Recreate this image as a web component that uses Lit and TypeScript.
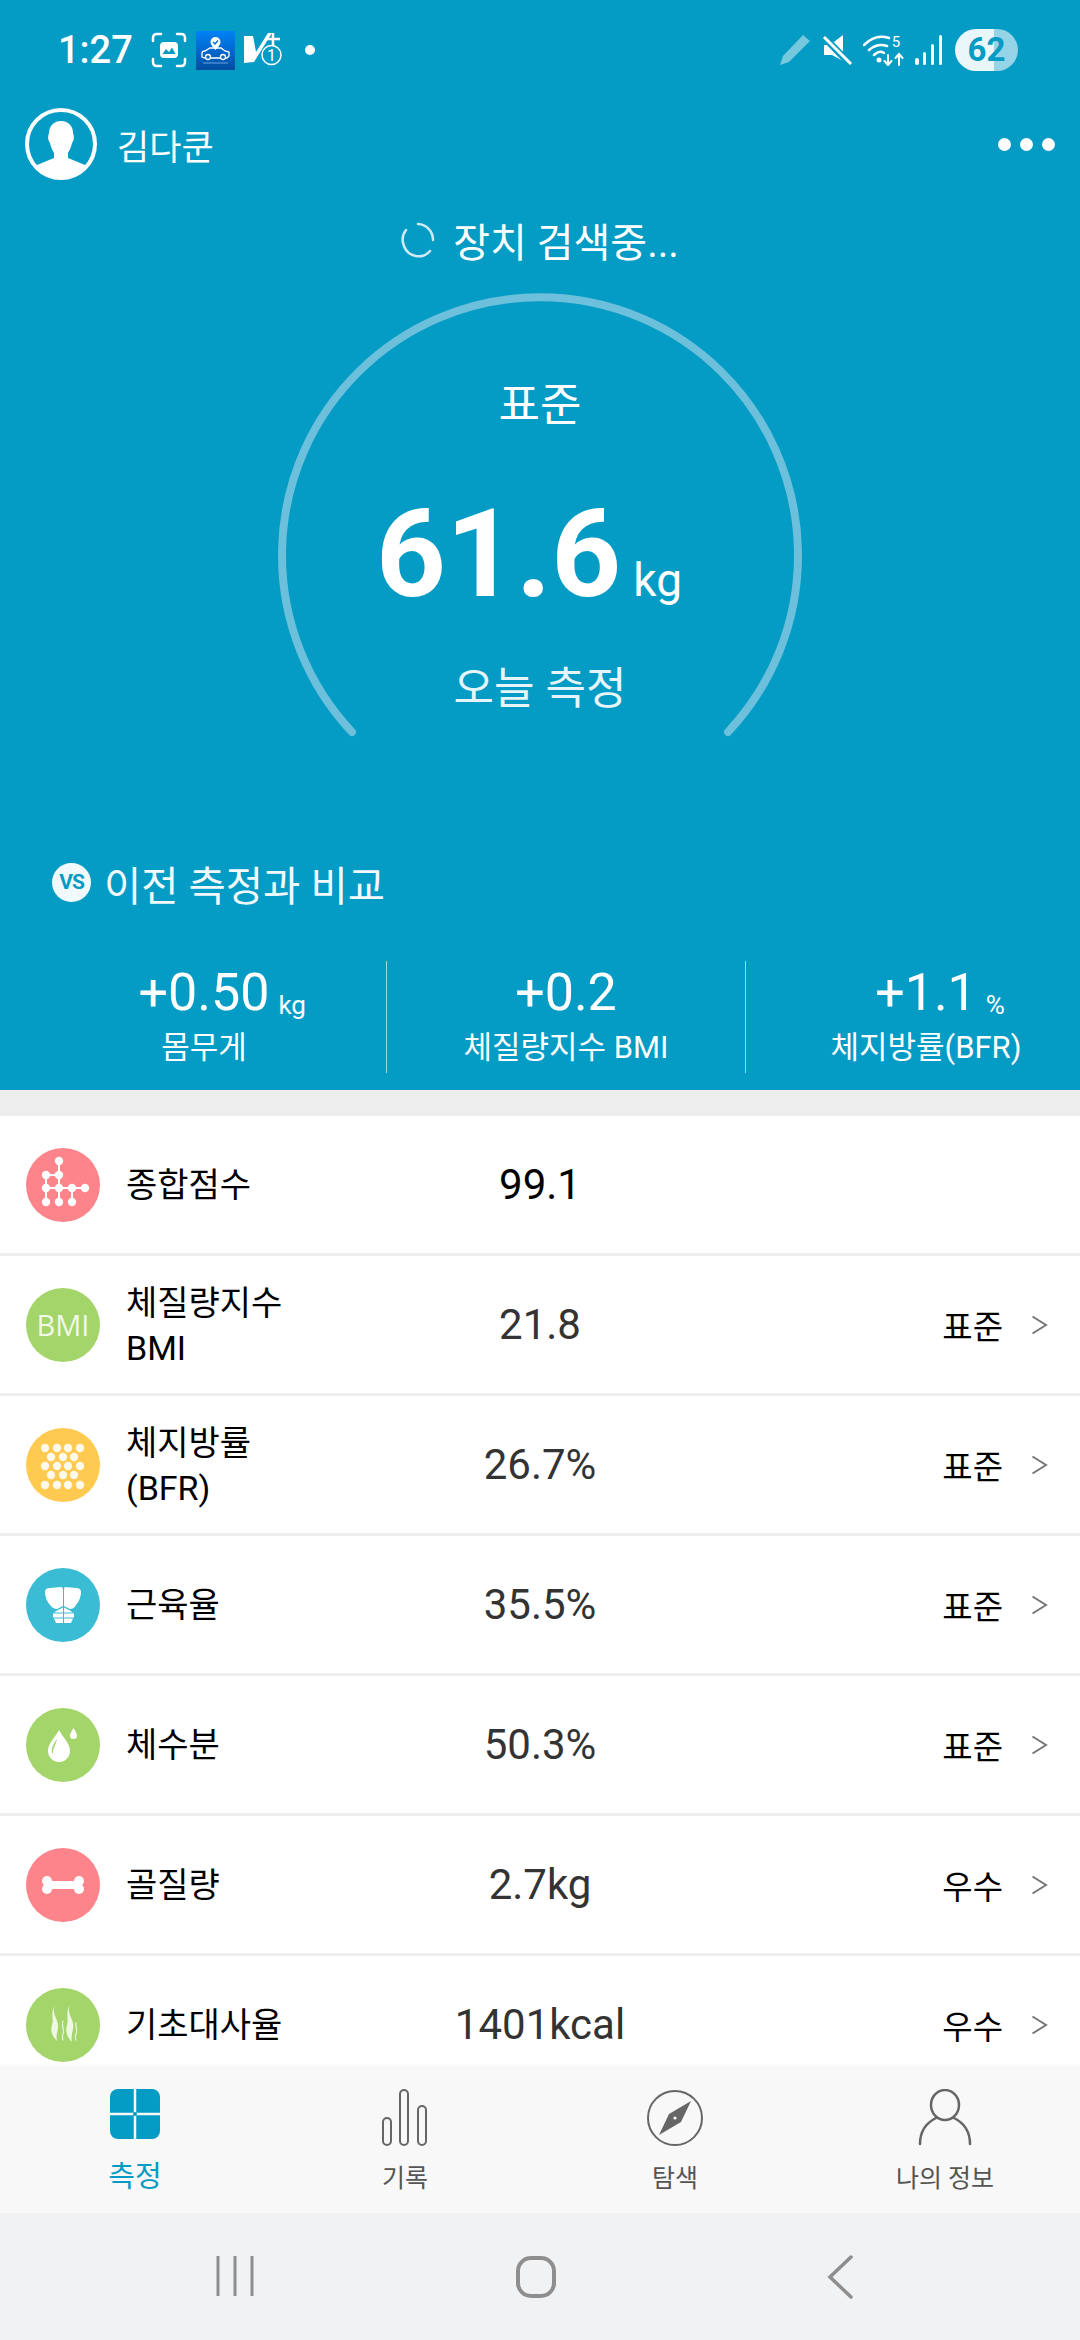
import { LitElement, html, svg, css } from "lit";
import { customElement } from "lit/decorators.js";

const PINK = "#fd848a";
const GREEN = "#a4d56b";

const scoreNodes = [
  [33, 13], [20, 27], [33, 27], [20, 40], [33, 40],
  [46, 40], [59, 40], [20, 54], [33, 54], [46, 54],
];
const scoreIcon = html`<svg class="icon" viewBox="0 0 74 74">
  <circle cx="37" cy="37" r="37" fill=${PINK} />
  <path d="M33 13V54M20 27H33M20 27V54M20 40H59M46 40V54" stroke="#fff" stroke-width="2" fill="none" />
  ${scoreNodes.map(([x, y]) => svg`<circle cx=${x} cy=${y} r="4.2" fill="#fff" />`)}
</svg>`;

const bmiIcon = html`<div class="icon bmi">BMI</div>`;

const fatDots = [
  [19, 20], [31, 20], [42, 20], [54, 20],
  [25, 29], [37, 29], [48, 29],
  [19, 38], [31, 38], [42, 38], [54, 38],
  [25, 47], [37, 47], [48, 47],
  [19, 57], [31, 57], [42, 57], [54, 57],
];
const fatIcon = html`<svg class="icon" viewBox="0 0 74 74">
  <circle cx="37" cy="37" r="37" fill="#ffca4f" />
  ${fatDots.map(([x, y]) => svg`<circle cx=${x} cy=${y} r="4.2" fill="#fff" fill-opacity=".88" />`)}
</svg>`;

const muscleIcon = html`<svg class="icon" viewBox="0 0 74 74">
  <circle cx="37" cy="37" r="37" fill="#3abcd4" />
  <g fill="#fff">
    <path d="M19 24Q19 20 24 20L35 19Q37 19 37 22V38L31 41Q27 41 24 37Q19 31 19 24Z" />
    <path d="M55 24Q55 20 50 20L39 19Q38 19 38 22V38L44 41Q48 41 50 37Q55 31 55 24Z" />
    <path d="M31 42.500L37 39.500V44.500H28ZM44 42.500L38 39.500V44.500H47Z" />
    <path d="M27 45.500H37V49.500H27ZM38 45.500H48V49.500H38Z" />
    <path d="M28 50.500H37V55H30ZM38 50.500H47L45 55H38Z" />
  </g>
</svg>`;

const waterIcon = html`<svg class="icon" viewBox="0 0 74 74">
  <circle cx="37" cy="37" r="37" fill=${GREEN} />
  <path d="M33 22C37 30 44 35 44 43A11 11 0 0 1 22 43C22 35 29 30 33 22Z" fill="#fff" />
  <path d="M31 31C30 37 26 41 27 47C24 42 27 36 31 31Z" fill=${GREEN} />
  <path d="M47.500 20C49 23 51 25 51 27.500A3.500 3.500 0 0 1 44 27.500C44 25 46 23 47.500 20Z" fill="#fff" />
</svg>`;

const boneIcon = html`<svg class="icon" viewBox="0 0 74 74">
  <circle cx="37" cy="37" r="37" fill=${PINK} />
  <g fill="#fff">
    <rect x="21" y="33" width="32" height="8" />
    <circle cx="21" cy="33" r="5" />
    <circle cx="21" cy="41" r="5" />
    <circle cx="53" cy="33" r="5" />
    <circle cx="53" cy="41" r="5" />
  </g>
</svg>`;

const heatIcon = html`<svg class="icon" viewBox="0 0 74 74">
  <circle cx="37" cy="37" r="37" fill=${GREEN} />
  <g fill="#fff" fill-opacity=".8">
    <path d="M29 18C25 26 33 31 32 40C31 45 30 48 31 53C26 48 24 43 26 37C28 31 24 25 29 18Z" />
    <path d="M44 17C40 26 49 31 47 41C46 46 45 49 46 54C41 49 39 43 41 37C43 31 39 25 44 17Z" />
  </g>
  <g fill="none" stroke="#fff" stroke-opacity=".7" stroke-width="1.300" stroke-linecap="round">
    <path d="M37 33C35 38 39 42 37 46C36 49 36 50 37 52" />
    <path d="M50 35C49 39 52 42 50 46C49 49 49 50 50 52" />
  </g>
</svg>`;

const rows = [
  { icon: scoreIcon, label: "종합점수", value: "99.1", grade: "", strong: true },
  { icon: bmiIcon, label: "체질량지수 BMI", value: "21.8", grade: "표준" },
  { icon: fatIcon, label: "체지방률(BFR)", value: "26.7%", grade: "표준" },
  { icon: muscleIcon, label: "근육율", value: "35.5%", grade: "표준" },
  { icon: waterIcon, label: "체수분", value: "50.3%", grade: "표준" },
  { icon: boneIcon, label: "골질량", value: "2.7kg", grade: "우수" },
  { icon: heatIcon, label: "기초대사율", value: "1401kcal", grade: "우수" },
];

const stats = [
  { value: "+0.50", unit: "kg", label: "몸무게" },
  { value: "+0.2", unit: "", label: "체질량지수 BMI" },
  { value: "+1.1", unit: "%", label: "체지방률(BFR)" },
];

const tabs = [
  {
    label: "측정",
    active: true,
    icon: html`<svg class="tab-icon" viewBox="0 0 56 58">
      <rect x="3" y="0" width="50" height="50" rx="8" fill="#049bc4" />
      <path d="M28 0V50M3 25H53" stroke="#f8f8f8" stroke-width="2.500" />
      <circle cx="28" cy="25" r="2" fill="#049bc4" />
    </svg>`,
  },
  {
    label: "기록",
    icon: html`<svg class="tab-icon" viewBox="0 0 56 58">
      <g fill="none" stroke="#666" stroke-width="2">
        <rect x="6" y="29" width="8" height="27" rx="4" />
        <rect x="23" y="1" width="8" height="55" rx="4" />
        <rect x="41" y="17" width="8" height="39" rx="4" />
      </g>
    </svg>`,
  },
  {
    label: "탐색",
    icon: html`<svg class="tab-icon" viewBox="0 0 56 58">
      <circle cx="28" cy="29" r="27" fill="none" stroke="#666" stroke-width="2" />
      <path d="M44 12L34 33L12 46L22 25Z" fill="#666" />
      <circle cx="28" cy="29" r="1.600" fill="#f8f8f8" />
    </svg>`,
  },
  {
    label: "나의 정보",
    icon: html`<svg class="tab-icon" viewBox="0 0 56 58">
      <g fill="none" stroke="#666" stroke-width="2.500" stroke-linecap="round">
        <ellipse cx="28" cy="16" rx="14" ry="15" />
        <path d="M3 55C3 42 9 34 19 29M53 55C53 42 47 34 37 29" />
      </g>
    </svg>`,
  },
];

@customElement("app-root")
export class AppRoot extends LitElement {
  static styles = css`
    :host {
      display: flex;
      flex-direction: column;
      width: 1080px;
      height: 2340px;
      overflow: hidden;
      background: #fff;
      font-family: Roboto, "Noto Sans CJK KR", sans-serif;
    }
    svg {
      display: block;
      flex: none;
    }

    /* top blue block */
    .hero {
      flex: none;
      height: 1090px;
      display: flex;
      flex-direction: column;
      background: #049bc4;
      color: #fff;
    }
    .status {
      height: 100px;
      display: flex;
      align-items: center;
      padding: 0 62px 0 58px;
      box-sizing: border-box;
    }
    .time {
      width: 93px;
      font-size: 38px;
      font-weight: 500;
    }
    .status-left {
      display: flex;
      align-items: center;
      gap: 9px;
    }
    .status-dot {
      width: 10px;
      height: 10px;
      margin-left: 12px;
      border-radius: 50%;
      background: #fff;
    }
    .status-right {
      margin-left: auto;
      display: flex;
      align-items: center;
      gap: 10px;
    }
    .battery {
      width: 63px;
      height: 42px;
      margin-left: 2px;
      border-radius: 21px;
      background: linear-gradient(90deg, #e9f7fb 0 39px, #95d3e6 39px);
      color: #049bc4;
      font-size: 33px;
      font-weight: 700;
      line-height: 42px;
      text-align: center;
    }
    .profile {
      height: 88px;
      display: flex;
      align-items: center;
      padding: 0 25px;
    }
    .name {
      margin-left: 20px;
      font-size: 35px;
    }
    .more {
      margin-left: auto;
      display: flex;
      gap: 9px;
    }
    .more i {
      width: 13px;
      height: 13px;
      border-radius: 50%;
      background: #fff;
    }
    .searching {
      height: 92px;
      display: flex;
      align-items: center;
      justify-content: center;
      gap: 18px;
      padding-top: 12px;
      box-sizing: border-box;
      font-size: 40px;
    }
    .gauge {
      position: relative;
      height: 570px;
      display: flex;
      flex-direction: column;
      align-items: center;
      padding-top: 100px;
      box-sizing: border-box;
    }
    .gauge-arc {
      position: absolute;
      top: 0;
      left: 270px;
    }
    .grade {
      font-size: 45px;
      line-height: 52px;
    }
    .weight {
      display: flex;
      align-items: baseline;
      margin-top: 50px;
      padding-right: 22px;
      line-height: 146px;
    }
    .weight b {
      font-size: 122px;
      font-weight: 700;
    }
    .weight span {
      margin-left: 12px;
      font-size: 46px;
    }
    .today {
      margin-top: 10px;
      font-size: 44px;
      line-height: 52px;
      opacity: 0.9;
    }
    .compare {
      height: 64px;
      display: flex;
      align-items: center;
      gap: 13px;
      padding: 2px 0 0 52px;
      box-sizing: border-box;
      font-size: 40.500px;
      opacity: 0.95;
    }
    .vs {
      width: 39px;
      height: 39px;
      margin-top: -2px;
      border-radius: 50%;
      background: #fff;
      color: #049bc4;
      font-size: 21px;
      font-weight: 700;
      line-height: 39px;
      text-align: center;
      letter-spacing: -1px;
    }
    .stats {
      display: grid;
      grid-template-columns: 386px 359px 335px;
      height: 112px;
      margin-top: 47px;
    }
    .stat {
      display: flex;
      flex-direction: column;
      align-items: center;
      box-sizing: border-box;
      border-left: 1px solid rgba(255, 255, 255, 0.6);
    }
    .stat:nth-child(1) {
      border-left: none;
      padding-left: 22px;
    }
    .stat:nth-child(3) {
      padding-left: 26px;
    }
    .stat-value {
      position: relative;
      font-size: 52px;
      line-height: 60px;
      margin-top: 2px;
    }
    .stat-unit {
      position: absolute;
      left: 100%;
      bottom: 3px;
      margin-left: 9px;
      font-size: 26px;
      line-height: 30px;
    }
    .stat-label {
      margin-top: 4px;
      font-size: 31px;
      line-height: 42px;
      white-space: nowrap;
    }

    .gap {
      flex: none;
      height: 26px;
      background: #eee;
    }

    /* measurement list, cut off by the tab bar */
    .list {
      flex: 1;
      min-height: 0;
      overflow: hidden;
    }
    .row {
      height: 137px;
      display: grid;
      grid-template-columns: 1fr auto 1fr;
      align-items: center;
      padding: 0 26px;
      border-bottom: 3px solid #eee;
    }
    .row-left {
      display: flex;
      align-items: center;
      gap: 26px;
    }
    .icon {
      width: 74px;
      height: 74px;
      flex: none;
    }
    .bmi {
      border-radius: 50%;
      background: #a4d56b;
      color: rgba(255, 255, 255, 0.85);
      font-family: "Open Sans", sans-serif;
      font-size: 29px;
      line-height: 74px;
      text-align: center;
    }
    .label {
      max-width: 172px;
      padding-top: 2px;
      color: #000;
      font-size: 34px;
      line-height: 45px;
    }
    .value {
      color: #333;
      font-size: 42px;
    }
    .value.strong {
      color: #000;
    }
    .row-right {
      display: flex;
      align-items: center;
      justify-content: flex-end;
      gap: 28px;
      padding-right: 6px;
      color: #000;
      font-size: 33px;
    }

    /* bottom tabs */
    .tabs {
      flex: none;
      height: 150px;
      display: grid;
      grid-template-columns: repeat(4, 270px);
      background: linear-gradient(#fff, #f8f8f8 3px);
    }
    .tab {
      display: flex;
      flex-direction: column;
      align-items: center;
      padding-top: 26px;
      color: #555;
      font-size: 25px;
      line-height: 40px;
    }
    .tab.active {
      color: #049bc4;
      font-size: 29px;
    }
    .tab-icon {
      width: 56px;
      height: 58px;
      margin-bottom: 12px;
    }
    .tab.active .tab-icon {
      margin-bottom: 10px;
    }

    .sysnav {
      flex: none;
      height: 127px;
      display: flex;
      align-items: flex-start;
      gap: 261px;
      box-sizing: border-box;
      padding: 42px 0 0 216px;
      background: #f1f2f4;
    }
    .home {
      margin-right: 6px;
    }
  `;

  render() {
    return html`
      <section class="hero">
        ${this.renderStatus()}
        <div class="profile">
          <svg width="72" height="74" viewBox="0 0 72 74">
            <defs>
              <clipPath id="avatar-clip"><circle cx="36" cy="37" r="34" /></clipPath>
            </defs>
            <circle cx="36" cy="37" r="34" fill="#049bc4" stroke="#fff" stroke-width="4" />
            <path
              clip-path="url(#avatar-clip)"
              d="M36 14C44 14 48 20 48 26C49.500 30 49 34 47 36C46 41 44 44 43 46V51L60 58V74H12V58L29 51V46C28 44 26 41 25 36C23 34 22.500 30 24 26C24 20 28 14 36 14Z"
              fill="#fff"
            />
          </svg>
          <span class="name">김다쿤</span>
          <div class="more"><i></i><i></i><i></i></div>
        </div>
        <div class="searching">
          <svg width="34" height="36" viewBox="0 0 34 36">
            <path
              d="M17 2A15.500 16 0 0 1 32 18M29 29A15.500 16 0 0 1 3 24A16 16 0 0 1 5 8"
              fill="none"
              stroke="#cfeaf3"
              stroke-width="2.500"
              stroke-linecap="round"
            />
          </svg>
          <span>장치 검색중...</span>
        </div>
        <div class="gauge">
          <svg class="gauge-arc" width="540" height="470" viewBox="0 0 540 470">
            <path
              d="M82 452A258 258 0 1 1 458 452"
              fill="none"
              stroke="#6cc0dc"
              stroke-width="8"
              stroke-linecap="round"
            />
          </svg>
          <div class="grade">표준</div>
          <div class="weight"><b>61.6</b><span>kg</span></div>
          <div class="today">오늘 측정</div>
        </div>
        <div class="compare">
          <div class="vs">VS</div>
          <span>이전 측정과 비교</span>
        </div>
        <div class="stats">
          ${stats.map(
            (s) => html`
              <div class="stat">
                <div class="stat-value">
                  ${s.value}${s.unit ? html`<span class="stat-unit">${s.unit}</span>` : ""}
                </div>
                <div class="stat-label">${s.label}</div>
              </div>
            `
          )}
        </div>
      </section>
      <div class="gap"></div>
      <section class="list">
        ${rows.map(
          (r) => html`
            <div class="row">
              <div class="row-left">
                ${r.icon}
                <div class="label">${r.label}</div>
              </div>
              <div class="value ${r.strong ? "strong" : ""}">${r.value}</div>
              <div class="row-right">
                ${r.grade
                  ? html`<span>${r.grade}</span>
                      <svg width="17" height="20" viewBox="0 0 17 20">
                        <path d="M1.500 1.500L15 10L1.500 18.500" fill="none" stroke="#777" stroke-width="2" />
                      </svg>`
                  : ""}
              </div>
            </div>
          `
        )}
      </section>
      <nav class="tabs">
        ${tabs.map(
          (t) => html`
            <div class="tab ${t.active ? "active" : ""}">
              ${t.icon}
              <span>${t.label}</span>
            </div>
          `
        )}
      </nav>
      <div class="sysnav">
        <svg width="38" height="42" viewBox="0 0 38 42">
          <path d="M2 1V41M19 1V41M36 1V41" stroke="#8e8e8e" stroke-width="3" />
        </svg>
        <svg class="home" width="44" height="44" viewBox="0 0 44 44">
          <rect x="3" y="3" width="36" height="38" rx="13" fill="none" stroke="#8e8e8e" stroke-width="4" />
        </svg>
        <svg width="28" height="44" viewBox="0 0 28 44">
          <path d="M25 2L4 22L25 42" fill="none" stroke="#8e8e8e" stroke-width="3.500" stroke-linecap="round" />
        </svg>
      </div>
    `;
  }

  private renderStatus() {
    return html`
      <div class="status">
        <span class="time">1:27</span>
        <div class="status-left">
          <svg width="36" height="36" viewBox="0 0 36 36">
            <g fill="none" stroke="#fff" stroke-width="2.500" stroke-linecap="round">
              <path d="M2 9V6Q2 2 6 2H10M26 2H30Q34 2 34 6V9M34 27V30Q34 34 30 34H26M10 34H6Q2 34 2 30V27" />
            </g>
            <rect x="9" y="10" width="18" height="16" rx="4" fill="#fff" />
            <path d="M11.500 22L15 17L18 20L21 15.500L24.500 22Z" fill="#049bc4" />
          </svg>
          <svg width="39" height="39" viewBox="0 0 39 39">
            <defs>
              <linearGradient id="car-bg" x1="0" y1="0" x2="0" y2="1">
                <stop offset="0" stop-color="#0082f8" />
                <stop offset="1" stop-color="#004da0" />
              </linearGradient>
            </defs>
            <rect width="39" height="39" fill="url(#car-bg)" />
            <path d="M19.500 6A5 5 0 0 1 24.500 11C24.500 14 21 17 19.500 19C18 17 14.500 14 14.500 11A5 5 0 0 1 19.500 6Z" fill="#fff" />
            <path d="M17 11L19 13L22 9.500" stroke="#0468c8" stroke-width="1.300" fill="none" />
            <path
              d="M6 26V22Q6 20 9 20L14 17H25L29 20L33 21V25L31 27H9Z"
              fill="none"
              stroke="#fff"
              stroke-width="1.300"
            />
            <circle cx="12" cy="26" r="2.500" fill="#0468c8" stroke="#fff" stroke-width="1.300" />
            <circle cx="27" cy="26" r="2.500" fill="#0468c8" stroke="#fff" stroke-width="1.300" />
            <path d="M7 32H32" stroke="#6ea4dc" stroke-width="1" />
          </svg>
          <svg width="40" height="38" viewBox="0 0 40 38">
            <path d="M0 5H9L12 21L24 2H28L10 31L0 32Z" fill="#fff" />
            <path d="M29 2V14M23 8H36" stroke="#fff" stroke-width="2.500" />
            <circle cx="27.500" cy="24" r="9.500" fill="#049bc4" stroke="#fff" stroke-width="1.500" />
            <text x="27.500" y="30" fill="#fff" font-size="16" text-anchor="middle" font-family="Roboto">1</text>
          </svg>
          <div class="status-dot"></div>
        </div>
        <div class="status-right">
          <svg width="32" height="32" viewBox="0 0 32 32">
            <path d="M24 1L31 7L10 28L1 31L4 22Z" fill="#fff" fill-opacity=".45" />
          </svg>
          <svg width="32" height="32" viewBox="0 0 32 32">
            <path d="M22 1V27L11 21H3V11H9Z" fill="#fff" />
            <path d="M2 2L30 31" stroke="#049bc4" stroke-width="7" />
            <path d="M3 3L30 30" stroke="#fff" stroke-width="3" />
          </svg>
          <svg width="42" height="32" viewBox="0 0 42 32">
            <g fill="none" stroke="#fff" stroke-width="2.500" stroke-linecap="round">
              <path d="M1 11C9 3 17 1 26 4M6 16C12 11 18 10 24 12M11 21C14 18 18 17 21 19" />
              <path d="M25 21V30M21.500 27L25 31L28.500 27M36 31V21M32.500 24L36 20L39.500 24" stroke-width="2" />
            </g>
            <circle cx="16" cy="26" r="2.500" fill="#fff" />
            <text x="33" y="13" fill="#fff" font-size="15" text-anchor="middle" font-family="Roboto">5</text>
          </svg>
          <svg width="28" height="30" viewBox="0 0 28 30">
            <g fill="#fff">
              <rect x="0" y="23" width="4" height="7" rx="2" />
              <rect x="8" y="17" width="3" height="13" rx="1.500" />
              <rect x="16" y="9" width="3" height="21" rx="1.500" />
              <rect x="24" y="0" width="3" height="30" rx="1.500" />
            </g>
          </svg>
          <div class="battery">62</div>
        </div>
      </div>
    `;
  }
}
